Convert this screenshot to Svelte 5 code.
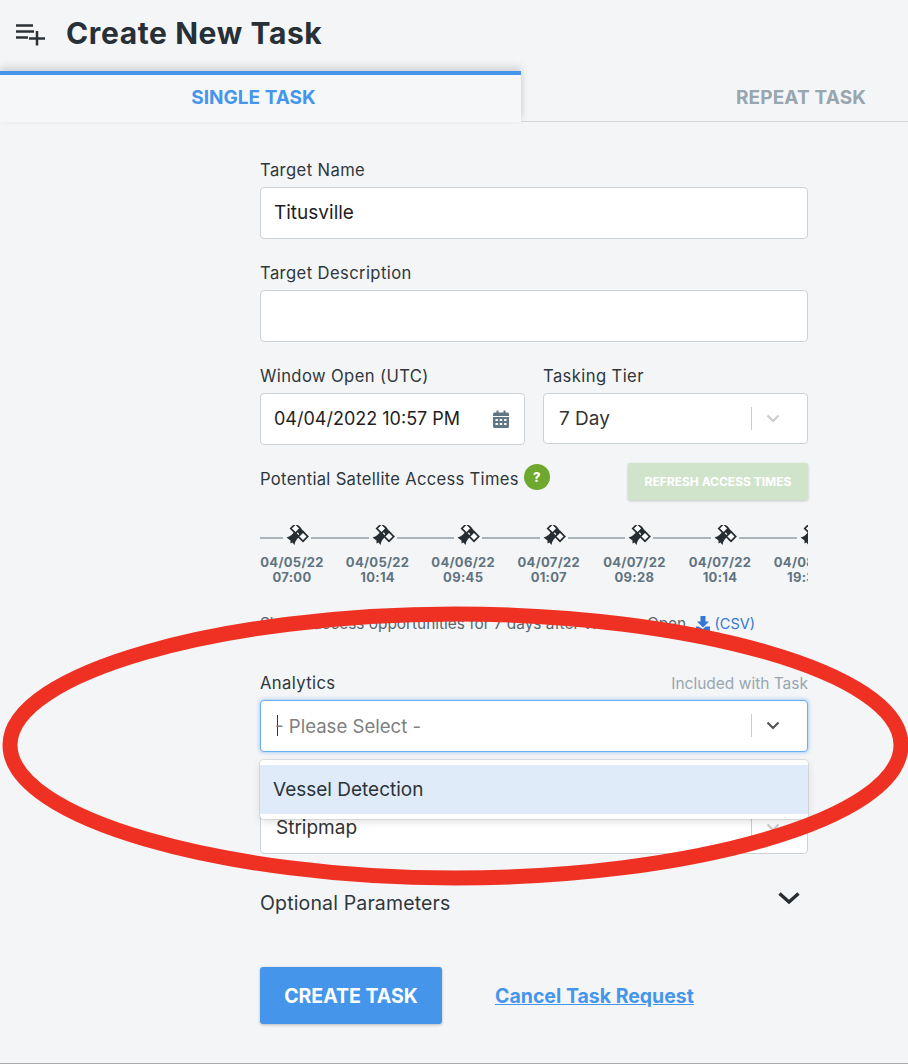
<script>
  const passes = [
    ['04/05/22', '07:00'], ['04/05/22', '10:14'], ['04/06/22', '09:45'], ['04/07/22', '01:07'],
    ['04/07/22', '09:28'], ['04/07/22', '10:14'], ['04/08/22', '19:30']
  ];
</script>

<div class="page">
  <header class="head">
    <svg class="listplus" viewBox="0 0 30 22" width="30" height="22" aria-hidden="true">
      <path d="M0 1.500h17M0 7.500h18M0 13.500h12M13 14.500h16M21 7v14.500" fill="none" stroke="#2a3236" stroke-width="2.500"/>
    </svg>
    <h1>Create New Task</h1>
  </header>

  <nav class="tabs">
    <div class="tab active">SINGLE TASK</div>
    <div class="tab other">REPEAT TASK</div>
  </nav>

  <form class="form">
    <div class="field">
      <span class="label">Target Name</span>
      <div class="input">Titusville</div>
    </div>
    <div class="field">
      <span class="label">Target Description</span>
      <div class="input"></div>
    </div>
    <div class="row">
      <div class="field date">
        <span class="label">Window Open (UTC)</span>
        <div class="input between">
          04/04/2022 10:57 PM
          <svg viewBox="0 0 16 18" width="16" height="18" aria-hidden="true">
            <path fill="#607684" d="M1.500 2.500h2V.5h2v2h5V.5h2v2h2A1.500 1.500 0 0 1 16 4v2H0V4a1.500 1.500 0 0 1 1.500-1.500zM0 7h16v9.500a1.500 1.500 0 0 1-1.500 1.500h-13A1.500 1.500 0 0 1 0 16.500z"/>
            <path fill="#fff" d="M2.500 9h2.400v2H2.500zM6.800 9h2.400v2H6.800zM11.100 9h2.400v2h-2.400zM2.500 13h2.400v2H2.500zM6.800 13h2.400v2H6.800zM11.100 13h2.400v2h-2.400z"/>
          </svg>
        </div>
      </div>
      <div class="field tier">
        <span class="label">Tasking Tier</span>
        <div class="input select muted">
          <span class="value">7 Day</span>
          <i class="sep"></i>
          <svg class="chev" viewBox="0 0 14 9" width="14" height="9" aria-hidden="true"><path d="M1.500 1.500 7 7l5.500-5.500" fill="none" stroke="#ccc" stroke-width="2.200"/></svg>
        </div>
      </div>
    </div>

    <div class="access">
      <span class="label inline">Potential Satellite Access Times</span>
      <span class="help">?</span>
      <span class="refresh">REFRESH ACCESS TIMES</span>
    </div>

    <div class="timeline">
      {#each passes as p}
        <div class="pass">
          <div class="track">
            <i class="left"></i>
            <svg viewBox="0 0 24 24" width="24" height="24" aria-hidden="true">
              <path fill="#262e33" d="M1.500 15.500C5.500 14.500 8 12 9.500 9L15 14.500C12.500 16 10 18.500 9.500 23L7.500 20.500 5.500 21.500 5.500 18.500z"/>
              <path fill="#262e33" d="M10.500 7.500 14 4 20 11 16.500 15z"/>
              <g transform="rotate(45 10.500 6.500)">
                <rect x="6.300" y="2.300" width="8.400" height="8.400" fill="#262e33"/>
                <rect x="8" y="4" width="5" height="5" fill="#fff"/>
              </g>
              <g transform="rotate(45 18 14.500)">
                <rect x="13.800" y="10.300" width="8.400" height="8.400" fill="#262e33"/>
                <rect x="15.500" y="12" width="5" height="5" fill="#fff"/>
              </g>
            </svg>
            <i class="right"></i>
          </div>
          <div class="when">{p[0]}<br />{p[1]}</div>
        </div>
      {/each}
    </div>

    <p class="note">
      Shows access opportunities for 7 days after Window Open
      <span class="csv">
        <svg viewBox="0 0 14 15" width="14" height="15" aria-hidden="true">
          <path fill="#3577d4" d="M4.500 0h5v5.500H13L7 11.500 1 5.500h3.500zM0 10.500h2.500L7 13l2.500-2.500H14V15H0z"/>
        </svg>
        (CSV)
      </span>
    </p>

    <div class="field analytics">
      <div class="labelrow">
        <span class="label">Analytics</span>
        <span class="included">Included with Task</span>
      </div>
      <div class="input select focus">
        <span class="caret"></span>
        <span class="placeholder">- Please Select -</span>
        <i class="sep"></i>
        <svg class="chev" viewBox="0 0 14 9" width="14" height="9" aria-hidden="true"><path d="M1.500 1.500 7 7l5.500-5.500" fill="none" stroke="#555" stroke-width="2.200"/></svg>
      </div>
      <div class="menu"><div class="option">Vessel Detection</div></div>
    </div>

    <div class="field mode">
      <div class="input select muted">
        <span class="value">Stripmap</span>
        <i class="sep"></i>
        <svg class="chev" viewBox="0 0 14 9" width="14" height="9" aria-hidden="true"><path d="M1.500 1.500 7 7l5.500-5.500" fill="none" stroke="#ccc" stroke-width="2.200"/></svg>
      </div>
    </div>

    <div class="optional">
      <span class="label big">Optional Parameters</span>
      <svg viewBox="0 0 24 14" width="24" height="14" aria-hidden="true"><path d="M2.500 2.500 12 11l9.500-8.500" fill="none" stroke="#262e33" stroke-width="3.400"/></svg>
    </div>

    <div class="actions">
      <span class="create">CREATE TASK</span>
      <span class="cancel">Cancel Task Request</span>
    </div>
  </form>

  <svg class="ring" viewBox="0 0 908 1064" width="908" height="1064" aria-hidden="true">
    <path d="M455 614 C 690 614 901 672 901 745 C 901 819 690 878 455 878 C 225 878 10 819 10 745 C 10 672 225 614 455 614 Z" fill="none" stroke="#ef3123" stroke-width="15"/>
  </svg>
</div>

<style>
  :global(body) { margin: 0; background: #f4f5f7; }
  .page {
    position: relative; width: 908px; height: 1064px; box-sizing: border-box; overflow: hidden;
    font-family: Inter, "Open Sans", sans-serif; color: #2b3338;
    background: #f4f5f7; border-bottom: 1px solid #aaa;
  }
  .head { display: flex; align-items: center; height: 71px; padding: 0 0 6px 16px; box-sizing: border-box; }
  .listplus { margin: 5px 20px 0 0; }
  h1 { margin: 0; font-size: 30px; font-weight: 700; letter-spacing: .6px; color: #263036; }
  .tabs { display: flex; height: 50px; border-bottom: 1px solid #d2d7da; }
  .tab { font-size: 19px; font-weight: 700; display: flex; align-items: center; justify-content: center; }
  .active {
    width: 521px; height: 51px; box-sizing: border-box; border-top: 4px solid #4596eb; color: #4596eb;
    background: #f6f7f9; box-shadow: 0 -4px 8px rgba(0,0,0,.14), 3px 0 6px -3px rgba(0,0,0,.08);
    padding: 0 14px 2px 0;
  }
  .other { flex: 1; color: #98a6af; padding: 3px 0 0 173px; letter-spacing: .15px; }
  .form { width: 548px; margin-left: 260px; padding-top: 38px; }
  .field { display: flex; flex-direction: column; margin-bottom: 24px; }
  .label { font-size: 16.600px; line-height: 20px; letter-spacing: .4px; color: #2f373c; }
  .field > .label { margin-bottom: 7px; }
  .input {
    box-sizing: border-box; height: 52px; background: #fff; border: 1px solid #ccd3d7; border-radius: 4px;
    display: flex; align-items: center; padding: 0 13px 1px; font-size: 19px; color: #1e1e1e;
  }
  .between { justify-content: space-between; font-size: 18px; padding-right: 15px; }
  .row { display: flex; gap: 18px; }
  .date { width: 265px; }
  .tier { width: 265px; }
  .tier .input { height: 51px; }
  .select { padding: 0 34px 1px 15px; position: relative; }
  .value { flex: 1; color: #333; }
  .sep { width: 1px; height: 23px; background: #ccc; margin-right: 14px; }
  .chev { flex: none; }
  .select .chev { margin-right: -7px; }
  .access { display: flex; align-items: center; height: 37px; margin-top: -6px; }
  .inline { margin: -5px 5px 0 0; letter-spacing: .3px; }
  .help {
    width: 26px; height: 26px; border-radius: 50%; background: #6fa82f; color: #fff; font-size: 13px; font-weight: 800;
    display: flex; align-items: center; justify-content: center; margin-top: -9px;
  }
  .refresh {
    margin-left: auto; width: 180px; height: 37px; background: #d0e4cb; color: #fff; font-size: 12px; font-weight: 700;
    display: flex; align-items: center; justify-content: center; border-radius: 2px; box-shadow: 0 1px 3px rgba(0,0,0,.2);
  }
  .timeline { display: flex; overflow: hidden; margin-top: 25px; }
  .pass { flex: 0 0 85.600px; }
  .track { display: flex; align-items: center; height: 26px; gap: 2px; }
  .track i { height: 2.500px; background: #a9b5bb; }
  .track .left { width: 23px; }
  .track .right { flex: 1; }
  .track svg { flex: none; margin-top: -8px; }
  .when {
    width: 64px; margin-top: 4px; text-align: center; font-size: 13px; line-height: 15px; font-weight: 700; letter-spacing: .3px; color: #5f7380; white-space: nowrap;
  }
  .note { margin: 30px 0 0; font-size: 15.400px; line-height: 18px; color: #5a666d; white-space: nowrap; height: 36px; }
  .csv { color: #3577d4; margin-left: 6px; font-size: 14.500px; }
  .csv svg { vertical-align: -2px; }
  .analytics { position: relative; margin-bottom: 0; margin-top: 22px; }
  .labelrow { display: flex; justify-content: space-between; align-items: baseline; margin-bottom: 7px; }
  .included { font-size: 15.500px; color: #98a6af; }
  .focus { border-color: #69aef5; box-shadow: 0 0 4px rgba(69,150,235,.6); }
  .caret { width: 1px; height: 21px; background: #333; margin-left: 1px; }
  .placeholder { flex: 1; margin-left: -3px; color: #808080; font-size: 18.600px; }
  .menu {
    position: absolute; z-index: 2; left: 0; right: 0; top: 87px; box-sizing: border-box; height: 59px; padding: 5px 0 4px; background: #fff;
    border-radius: 4px; box-shadow: 0 0 0 1px rgba(0,0,0,.08), 0 3px 8px rgba(0,0,0,.12);
  }
  .option { height: 49px; background: #e0ebfa; display: flex; align-items: center; padding-left: 13px; font-size: 19px; color: #2b3338; }
  .mode { margin-top: 50px; margin-bottom: 0; }
  .optional { display: flex; justify-content: space-between; align-items: center; margin-top: 39px; padding-right: 7px; }
  .big { font-size: 19.500px; letter-spacing: .15px; }
  .optional svg { margin-top: -10px; }
  .actions { display: flex; align-items: center; margin-top: 54px; gap: 53px; }
  .create {
    width: 182px; height: 57px; border-radius: 3px; background: #4596eb; color: #fff; font-size: 19.500px; font-weight: 700;
    display: flex; align-items: center; justify-content: center; box-shadow: 0 1px 3px rgba(0,0,0,.25);
  }
  .cancel { font-size: 19.500px; font-weight: 700; color: #4596eb; text-decoration: underline; }
  .ring { position: absolute; left: 0; top: 0; z-index: 3; pointer-events: none; }
</style>
